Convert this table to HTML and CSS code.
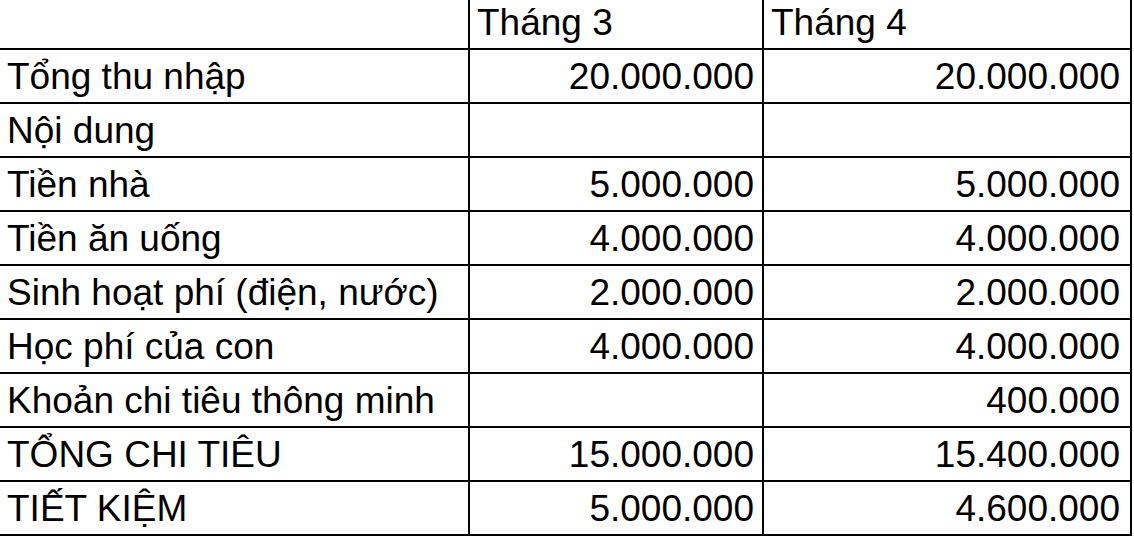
FILE: index.html
```html
<!DOCTYPE html>
<html lang="vi">
<head>
<meta charset="utf-8">
<title>Chi tiêu</title>
<link rel="stylesheet" href="styles.css">
</head>
<body>
<div class="sheet">
  <div class="cell head"></div>
  <div class="cell head">Tháng 3</div>
  <div class="cell head last">Tháng 4</div>

  <div class="cell">Tổng thu nhập</div>
  <div class="cell num">20.000.000</div>
  <div class="cell num last">20.000.000</div>

  <div class="cell">Nội dung</div>
  <div class="cell num"></div>
  <div class="cell num last"></div>

  <div class="cell">Tiền nhà</div>
  <div class="cell num">5.000.000</div>
  <div class="cell num last">5.000.000</div>

  <div class="cell">Tiền ăn uống</div>
  <div class="cell num">4.000.000</div>
  <div class="cell num last">4.000.000</div>

  <div class="cell">Sinh hoạt phí (điện, nước)</div>
  <div class="cell num">2.000.000</div>
  <div class="cell num last">2.000.000</div>

  <div class="cell">Học phí của con</div>
  <div class="cell num">4.000.000</div>
  <div class="cell num last">4.000.000</div>

  <div class="cell">Khoản chi tiêu thông minh</div>
  <div class="cell num"></div>
  <div class="cell num last">400.000</div>

  <div class="cell">TỔNG CHI TIÊU</div>
  <div class="cell num">15.000.000</div>
  <div class="cell num last">15.400.000</div>

  <div class="cell">TIẾT KIỆM</div>
  <div class="cell num">5.000.000</div>
  <div class="cell num last">4.600.000</div>
</div>
</body>
</html>
```
FILE: styles.css
```css
html, body {
  margin: 0;
  padding: 0;
  background: #ffffff;
}

.sheet {
  display: grid;
  grid-template-columns: 470px 294px 368px;
  grid-auto-rows: 54px;
  grid-template-rows: 50px;
  width: 1132px;
  font-family: "Liberation Sans", Arial, sans-serif;
  font-size: 37px;
  color: #000000;
}

.cell {
  box-sizing: border-box;
  border-right: 2px solid #000000;
  border-bottom: 2px solid #000000;
  padding: 1px 8px 0 7px;
  line-height: 51px;
  white-space: nowrap;
  overflow: hidden;
}

.head {
  line-height: 44px;
  padding-top: 1px;
  padding-bottom: 3px;
}

.num {
  text-align: right;
}

.last {
  padding-right: 10px;
}
```
